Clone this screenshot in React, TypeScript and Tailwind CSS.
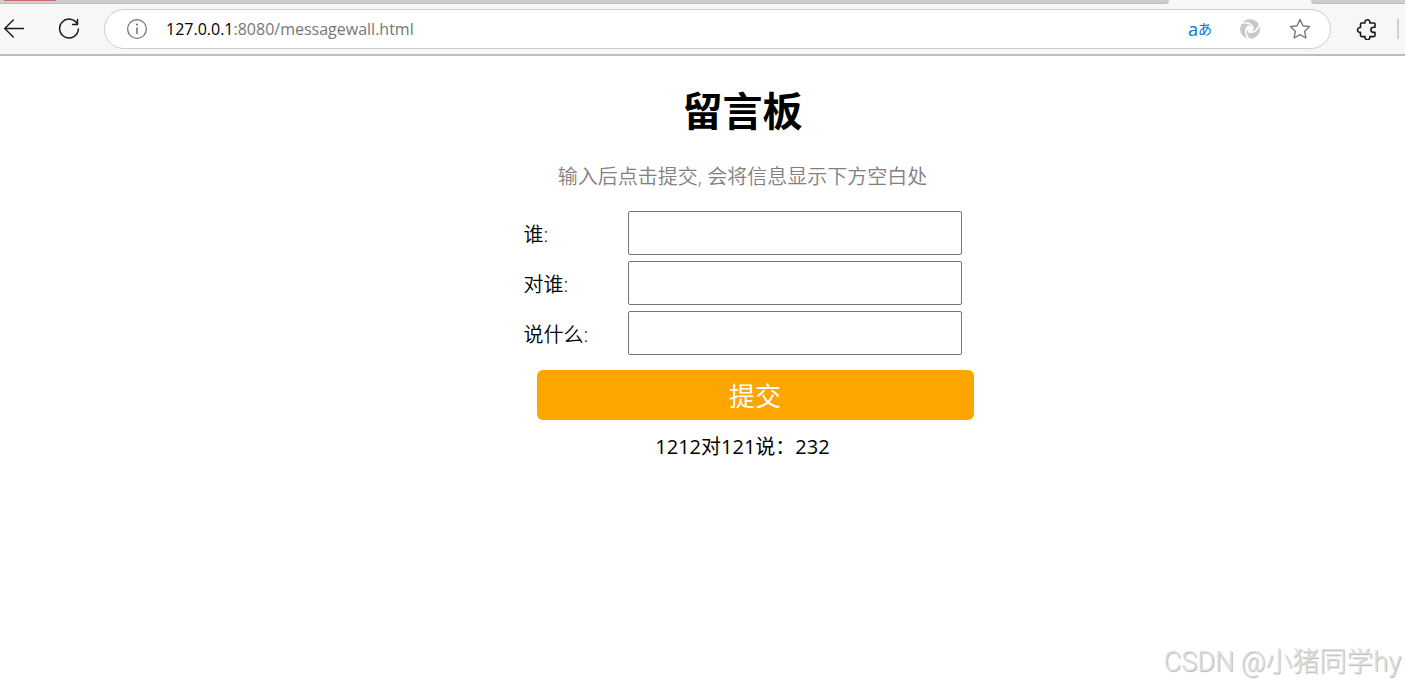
import { useState, type FormEvent } from "react";

const FIELDS = [
  { id: "from", label: "谁:" },
  { id: "to", label: "对谁:" },
  { id: "say", label: "说什么:" },
];

const SWIRL_GAP = "M1 5.500C7.500 3.200 13.800 5.800 14.300 11.500";

function BrowserBar() {
  return (
    <header className="border-b-2 border-[#bdbdbd] bg-[#f7f7f7]">
      <div className="flex h-1 justify-between">
        <div className="grow rounded-br border-b border-[#bdbdbd] bg-[#cdcdcd]">
          <div className="ml-1 h-px w-[52px] bg-[#c96a6a]" />
        </div>
        <div className="w-[142px]" />
        <div className="w-[94px] rounded-bl border-b border-[#bdbdbd] bg-[#cdcdcd]" />
      </div>
      <div className="flex h-[50px] items-center">
        <button type="button" aria-label="返回" className="ml-1 shrink-0">
          <svg width="20" height="20" viewBox="0 0 20 20" fill="none" stroke="#1a1a1a" strokeWidth="1.4" strokeLinecap="round" strokeLinejoin="round">
            <path d="M19.5 9.500H.7M9.300 1 .7 9.500l8.600 8.500" />
          </svg>
        </button>
        <button type="button" aria-label="刷新" className="ml-[34px] shrink-0">
          <svg width="22" height="22" viewBox="0 0 22 22" fill="none" stroke="#1a1a1a" strokeWidth="1.500" strokeLinecap="round" strokeLinejoin="round">
            <path d="M19.500 6.500A9.400 9.400 0 1 0 20.400 11M19.500 1.500v5h-5" />
          </svg>
        </button>
        <div className="ml-6 flex h-10 grow items-center rounded-full border border-[#cdcdcd] bg-white pr-[19px] pl-[21px]">
          <svg className="shrink-0" width="22" height="22" viewBox="0 0 22 22" fill="none" stroke="#767676" strokeWidth="1.300">
            <circle cx="11" cy="11" r="9.400" />
            <path d="M11 9.500v6.500" strokeWidth="1.600" />
            <circle cx="11" cy="6.600" r="1.100" fill="#767676" stroke="none" />
          </svg>
          <p className="ml-[18px] grow font-['Open_Sans','Noto_Sans',sans-serif] text-base leading-6 text-[#767676]">
            <span className="text-black">127.0.0.1</span>:8080/messagewall.html
          </p>
          <button type="button" aria-label="翻译" className="flex w-6 items-center justify-center font-['Open_Sans','Noto_Sans_CJK_JP',sans-serif] text-sm leading-6 text-[#0078d4]">
            <span className="text-lg leading-6">a</span>あ
          </button>
          <button type="button" aria-label="扩展" className="ml-[27px]">
            <svg width="22" height="22" viewBox="0 0 22 22" fill="none" stroke="#fff" strokeWidth="1.500">
              <circle cx="11" cy="11" r="10" fill="#c8c8c8" stroke="none" />
              <circle cx="11" cy="11" r="3" fill="#fff" stroke="none" />
              <path d={SWIRL_GAP} />
              <path d={SWIRL_GAP} transform="rotate(120 11 11)" />
              <path d={SWIRL_GAP} transform="rotate(240 11 11)" />
            </svg>
          </button>
          <button type="button" aria-label="收藏" className="ml-7">
            <svg width="22" height="22" viewBox="0 0 22 22" fill="none" stroke="#767676" strokeWidth="1.400" strokeLinejoin="round">
              <path d="m11 1.500 2.900 6.200 6.700.9-4.900 4.700 1.200 6.700-5.900-3.300L5.100 20l1.200-6.700L1.400 8.600l6.700-.9Z" />
            </svg>
          </button>
        </div>
        <button type="button" aria-label="插件" className="ml-[25px] shrink-0">
          <svg width="22" height="22" viewBox="0 0 22 22" fill="none" stroke="#1a1a1a" strokeWidth="1.600" strokeLinejoin="round">
            <path d="M9 5a2.500 2.500 0 1 1 4.800 0H18a1 1 0 0 1 1 1v3.200h-1.500a2.600 2.600 0 0 0 0 5.200H19v3.200a1 1 0 0 1-1 1h-4.200a2.500 2.500 0 1 1-4.800 0H5.500a1 1 0 0 1-1-1v-3.200a2.500 2.500 0 1 1 0-4.900V6a1 1 0 0 1 1-1Z" />
          </svg>
        </button>
        <div className="mr-[6px] ml-[19px] h-5 w-0.5 shrink-0 bg-[#cfcfcf]" />
      </div>
    </header>
  );
}

export default function App() {
  const [message, setMessage] = useState("1212对121说：232");

  function submit(event: FormEvent<HTMLFormElement>) {
    event.preventDefault();
    const data = new FormData(event.currentTarget);
    const [from, to, say] = FIELDS.map((field) => String(data.get(field.id)));
    if (from && to && say) {
      setMessage(`${from}对${to}说：${say}`);
      event.currentTarget.reset();
    }
  }

  return (
    <div className="flex min-h-screen flex-col bg-white font-['Open_Sans','Noto_Sans_CJK_SC',sans-serif] text-black">
      <BrowserBar />
      <main className="flex grow flex-col items-center pt-[27px] pl-20 text-xl font-[350]">
        <h1 className="text-[40px] leading-[56px] font-bold">留言板</h1>
        <p className="mt-[26px] leading-6 text-[#808080]">输入后点击提交, 会将信息显示下方空白处</p>
        <form onSubmit={submit} className="mt-[19px] flex w-[438px] flex-col">
          {FIELDS.map((field) => (
            <div key={field.id} className="flex h-[50px] items-center">
              <label htmlFor={field.id} className="w-[104px] pt-[3px]">{field.label}</label>
              <input id={field.id} name={field.id} type="text" className="h-11 w-[334px] rounded-xs border border-[#767676] px-1" />
            </div>
          ))}
          <button type="submit" className="mt-3 -mr-3 ml-[13px] h-[50px] rounded-md bg-[#ffa500] pt-0.5 text-[26px] font-normal text-white">提交</button>
        </form>
        <p className="mt-3 leading-[30px] font-normal">{message}</p>
      </main>
      <footer className="flex justify-end pr-1 pb-[7px] font-['Roboto','Noto_Sans_CJK_SC',sans-serif] text-[27px] leading-9 font-light text-[#dedede] [text-shadow:1px_1px_1px_#b4b4b4]">
        CSDN @小猪同学hy
      </footer>
    </div>
  );
}
